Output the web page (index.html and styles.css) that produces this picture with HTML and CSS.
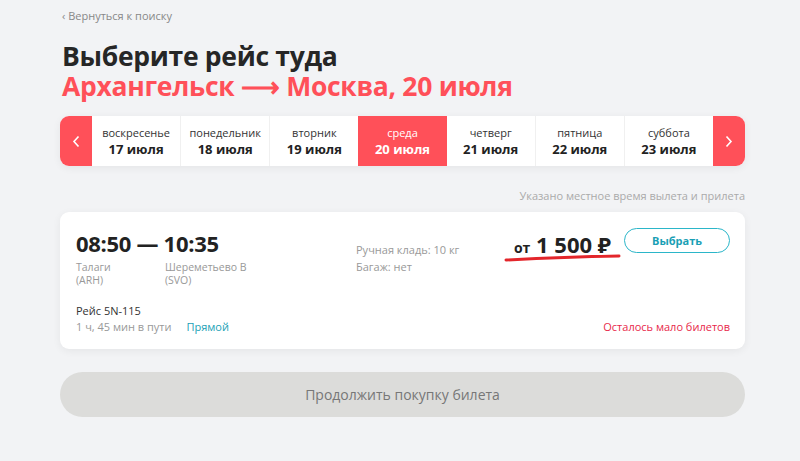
FILE: index.html
```html
<!DOCTYPE html>
<html lang="ru">
<head>
<meta charset="UTF-8">
<meta name="viewport" content="width=device-width, initial-scale=1.0">
<title>Выбор рейса</title>
<link rel="stylesheet" href="styles.css">
</head>
<body>
<div class="page">
  <a class="back-link" href="#">&#8249; Вернуться к поиску</a>
  <h1 class="title">
    Выберите рейс туда
    <span class="route">Архангельск &#10230; Москва, 20 июля</span>
  </h1>

  <div class="dates">
    <button class="arrow">
      <svg width="8" height="13" viewBox="0 0 8 13"><path d="M6.5 1.5 L2 6.5 L6.5 11.5" fill="none" stroke="#fff" stroke-width="1.6"/></svg>
    </button>
    <div class="day"><span class="dow">воскресенье</span><span class="date">17 июля</span></div>
    <div class="day"><span class="dow">понедельник</span><span class="date">18 июля</span></div>
    <div class="day"><span class="dow">вторник</span><span class="date">19 июля</span></div>
    <div class="day active"><span class="dow">среда</span><span class="date">20 июля</span></div>
    <div class="day"><span class="dow">четверг</span><span class="date">21 июля</span></div>
    <div class="day"><span class="dow">пятница</span><span class="date">22 июля</span></div>
    <div class="day"><span class="dow">суббота</span><span class="date">23 июля</span></div>
    <button class="arrow">
      <svg width="8" height="13" viewBox="0 0 8 13"><path d="M1.5 1.5 L6 6.5 L1.5 11.5" fill="none" stroke="#fff" stroke-width="1.6"/></svg>
    </button>
  </div>

  <p class="note">Указано местное время вылета и прилета</p>

  <div class="card">
    <div class="card-top">
      <div class="times">
        <div class="time-line">08:50 &#8212; 10:35</div>
        <div class="airports">
          <div class="airport">Талаги<br>(ARH)</div>
          <div class="airport">Шереметьево B<br>(SVO)</div>
        </div>
      </div>
      <div class="baggage">
        <div>Ручная кладь: 10 кг</div>
        <div>Багаж: нет</div>
      </div>
      <div class="price">
        <span class="from">от</span> 1 500 &#8381;
        <svg class="mark" width="118" height="8" viewBox="0 0 118 8"><path d="M2 6 Q60 3 115 2" fill="none" stroke="#e3262b" stroke-width="3" stroke-linecap="round"/></svg>
      </div>
      <button class="choose">Выбрать</button>
    </div>
    <div class="card-bottom">
      <div>
        <div class="flight">Рейс 5N-115</div>
        <div class="duration">1 ч, 45 мин в пути <span class="direct">Прямой</span></div>
      </div>
      <div class="few">Осталось мало билетов</div>
    </div>
  </div>

  <button class="continue">Продолжить покупку билета</button>
</div>
</body>
</html>
```

FILE: styles.css
```css
body {
  margin: 0;
  background-color: #f2f3f5;
  font-family: "Open Sans", "Noto Sans", sans-serif;
  color: #222;
}
.page {
  width: 685px;
  margin-left: 60px;
  padding-top: 8px;
}
.back-link {
  display: block;
  font-size: 11px;
  color: #888;
  text-decoration: none;
  padding-left: 2px;
}
.title {
  margin: 18px 0 0 2px;
  font-size: 26.5px;
  line-height: 30px;
  font-weight: 700;
  color: #262626;
  letter-spacing: -0.3px;
}
.route {
  display: block;
  color: #ff5059;
}
.dates {
  margin-top: 15px;
  display: flex;
  height: 50px;
  background-color: #fff;
  border-radius: 9px;
  overflow: hidden;
  box-shadow: 0 2px 8px rgba(0,0,0,0.06);
}
.arrow {
  width: 32px;
  border: none;
  background-color: #ff5059;
  padding: 0;
  display: flex;
  align-items: center;
  justify-content: center;
  cursor: pointer;
}
.day {
  flex: 1;
  display: flex;
  flex-direction: column;
  align-items: center;
  justify-content: center;
  border-left: 1px solid #f0f0f0;
}
.day:nth-child(2) {
  border-left: none;
}
.dow {
  font-size: 11px;
  color: #333;
  line-height: 15px;
}
.date {
  font-size: 13px;
  font-weight: 700;
  line-height: 18px;
  color: #222;
}
.day.active {
  background-color: #ff5059;
  border-left: none;
}
.day.active .dow,
.day.active .date {
  color: #fff;
}
.day.active + .day {
  border-left: none;
}
.note {
  margin: 22px 0 0;
  text-align: right;
  font-size: 11px;
  color: #aaa;
}
.card {
  margin-top: 9px;
  background-color: #fff;
  border-radius: 9px;
  box-shadow: 0 2px 8px rgba(0,0,0,0.06);
  padding: 16px 15px 14px 16px;
}
.card-top {
  display: flex;
  align-items: flex-start;
}
.times {
  width: 280px;
}
.time-line {
  font-size: 22px;
  font-weight: 700;
  line-height: 30px;
  color: #222;
  letter-spacing: -0.3px;
}
.airports {
  display: flex;
  margin-top: 3px;
}
.airport {
  font-size: 10.5px;
  line-height: 13px;
  color: #999;
  width: 89px;
}
.baggage {
  margin-top: 13px;
  font-size: 11px;
  line-height: 17px;
  color: #999;
  width: 140px;
}
.price {
  position: relative;
  margin-top: 1px;
  flex: 1;
  text-align: right;
  font-size: 22px;
  font-weight: 700;
  line-height: 30px;
  color: #222;
  padding-right: 13px;
}
.from {
  font-size: 14px;
}
.mark {
  position: absolute;
  right: 2px;
  top: 25px;
}
.choose {
  margin-top: 0;
  width: 106px;
  height: 25px;
  border: 1.5px solid #2bb6c9;
  border-radius: 13px;
  background-color: #fff;
  color: #1a9fb5;
  font-family: inherit;
  font-size: 11px;
  font-weight: 700;
  cursor: pointer;
}
.card-bottom {
  margin-top: 16px;
  display: flex;
  justify-content: space-between;
  align-items: flex-end;
}
.flight {
  font-size: 11px;
  line-height: 16px;
  color: #333;
}
.duration {
  font-size: 11px;
  line-height: 16px;
  color: #999;
}
.direct {
  color: #1a9fb5;
  margin-left: 12px;
}
.few {
  font-size: 11px;
  line-height: 16px;
  color: #e8284a;
}
.continue {
  margin-top: 23px;
  width: 100%;
  height: 45px;
  border: none;
  border-radius: 23px;
  background-color: #dcdcda;
  color: #777;
  font-family: inherit;
  font-size: 14px;
}
```
